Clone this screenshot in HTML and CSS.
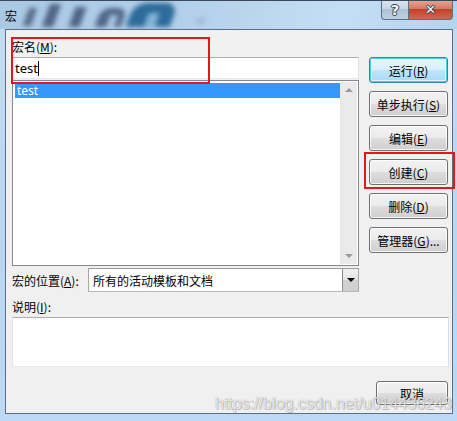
FILE: index.html
```html
<!DOCTYPE html>
<html>
<head>
<meta charset="utf-8">
<title>宏</title>
<link rel="stylesheet" href="styles.css">
</head>
<body>
<div class="window">
  <div class="titlebar">
    <div class="logo-blur">
      <span class="g g1"></span><span class="g g2"></span><span class="g g3"></span><span class="g g4"></span><span class="g g5"></span><span class="g g6"></span><span class="g g7"></span><span class="g g8"></span>
    </div>
    <span class="title">宏</span>
    <div class="caption-btns">
      <div class="cap help">?</div>
      <div class="cap close">✕</div>
    </div>
  </div>
  <div class="client">
    <div class="top">
      <div class="left">
        <div class="label">宏名(<u>M</u>):</div>
        <div class="input"><span class="input-text">test</span><span class="caret"></span></div>
        <div class="list">
          <div class="items"><div class="item sel">test</div></div>
          <div class="vscroll"><span class="arr up"></span><span class="arr down"></span></div>
        </div>
        <div class="locrow">
          <span class="label loc-label">宏的位置(<u>A</u>):</span>
          <div class="combo">
            <span class="combo-text">所有的活动模板和文档</span>
            <span class="combo-btn"><span class="tri"></span></span>
          </div>
        </div>
      </div>
      <div class="right">
        <div class="btn default">运行(<u>R</u>)</div>
        <div class="btn">单步执行(<u>S</u>)</div>
        <div class="btn">编辑(<u>E</u>)</div>
        <div class="btn">创建(<u>C</u>)</div>
        <div class="btn">删除(<u>D</u>)</div>
        <div class="btn">管理器(<u>G</u>)...</div>
      </div>
    </div>
    <div class="label desc-label">说明(<u>I</u>):</div>
    <div class="desc"></div>
    <div class="bottom"><div class="btn cancel">取消</div></div>
  </div>
  <div class="redbox r1"></div>
  <div class="redbox r2"></div>
  <div class="watermark">https://blog.csdn.net/u014436243</div>
</div>
</body>
</html>
```

FILE: styles.css
```css
* { box-sizing: border-box; }
html, body { margin: 0; padding: 0; }
body {
  width: 457px; height: 421px; overflow: hidden;
  font-family: "Noto Sans CJK SC", "Noto Sans", sans-serif;
  font-size: 12px; color: #000;
}
.window {
  position: relative;
  width: 457px; height: 421px;
  background: linear-gradient(180deg, #c2dcf2 0%, #b9d6f0 60%, #bcdaf5 100%);
  display: flex; flex-direction: column;
  overflow: hidden;
}
.titlebar {
  position: relative;
  height: 29px; flex: none;
  border-top: 1px solid #3a4a5c;
  background: linear-gradient(100deg, #a9c8e3 0%, #b3d0ea 40%, #c4def5 75%, #b4d3ee 100%);
  display: flex; align-items: center;
  overflow: hidden;
}
.title {
  position: relative;
  margin-left: 5px; margin-top: 2px;
  font-size: 12px; line-height: 14px;
  color: #000;
}
.logo-blur { position: absolute; left: 0; top: 0; width: 240px; height: 29px; filter: blur(2.5px); }
.g { position: absolute; display: block; transform: skewX(-20deg); }
.g1 { left: 26px; top: 7px; width: 8px; height: 18px; background: #566a88; }
.g2 { left: 46px; top: 3px; width: 11px; height: 23px; background: #4f6385; }
.g3 { left: 72px; top: 6px; width: 11px; height: 20px; background: #4f6385; }
.g4 { left: 98px; top: 7px; width: 26px; height: 19px; background: #506588; border-radius: 9px 9px 0 0; }
.g5 { left: 108px; top: 14px; width: 8px; height: 13px; background: #a9c8e3; }
.g6 { left: 130px; top: 2px; width: 44px; height: 24px; background: #2c6b9a; border-radius: 12px 12px 0 0; }
.g7 { left: 146px; top: 12px; width: 11px; height: 15px; background: #86b4d6; }
.g8 { left: 196px; top: 17px; width: 10px; height: 6px; background: #9bb9d4; border-radius: 50%; }
.caption-btns {
  position: absolute; right: 4px; top: -1px;
  display: flex; height: 20px;
}
.cap {
  height: 20px; display: flex; align-items: center; justify-content: center;
  font-family: "DejaVu Sans", sans-serif; font-weight: bold; color: #fff;
  border: 1px solid #5f6f80; border-top: none;
  text-shadow: 0 0 1px #2a3440, 1px 0 0 #3b4654, -1px 0 0 #3b4654, 0 1px 0 #3b4654, 0 -1px 0 #3b4654;
}
.help {
  width: 28px; font-size: 14px;
  border-radius: 0 0 0 4px;
  background: linear-gradient(180deg, #dbe6f1 0%, #c6d6e6 45%, #aec2d6 50%, #bcd0e3 100%);
}
.close {
  width: 44px; font-size: 13px; border-left: none;
  border-radius: 0 0 4px 0;
  background: linear-gradient(180deg, #e5a898 0%, #d47b66 45%, #c2432c 50%, #d0674d 100%);
}
.client {
  margin: 0 4px 7px 5px;
  height: 385px; flex: none;
  background: #f0f0f0;
  border: 1px solid #5d6f84;
  padding: 8px 4px 0 6px;
  display: flex; flex-direction: column;
}
.top { display: flex; gap: 10px; }
.left { width: 347px; display: flex; flex-direction: column; }
.label { line-height: 17px; height: 17px; white-space: nowrap; }
.label u { text-underline-offset: 1px; }
.input {
  margin-top: 2px; height: 22px;
  background: #fff; border: 1px solid #abadb3;
  border-color: #abadb3 #dbdfe6 #e3e9ef #e2e3ea;
  display: flex; align-items: center; padding-left: 2px;
}
.input-text { font-family: "Noto Sans", sans-serif; font-size: 13px; line-height: 16px; }
.caret { display: inline-block; width: 1px; height: 15px; background: #000; margin-left: 0; }
.list {
  margin-top: 1px; height: 186px;
  background: #fff; border: 1px solid #828790;
  display: flex; padding: 1px;
}
.items { flex: 1; padding: 1px 0 0 1px; }
.item { height: 15px; line-height: 15px; padding-left: 2px; font-family: "Noto Sans", sans-serif; font-size: 12px; }
.item.sel { background: #3399ff; color: #fff; }
.vscroll {
  width: 17px; background: #eaeaea; border-left: 1px solid #e6e6e6;
  display: flex; flex-direction: column; justify-content: space-between;
  align-items: center; padding: 6px 0 6px;
}
.arr { width: 0; height: 0; border-left: 4px solid transparent; border-right: 4px solid transparent; }
.arr.up { border-bottom: 4px solid #9a9a9a; }
.arr.down { border-top: 4px solid #9a9a9a; }
.locrow { margin-top: 2px; height: 24px; display: flex; align-items: center; }
.loc-label { width: 76px; }
.combo {
  flex: 1; height: 24px; background: #fff;
  border: 1px solid #7a7a7a; border-color: #9c9c9c #a8a8a8 #b8b8b8 #a8a8a8;
  display: flex; align-items: center;
}
.combo-text { flex: 1; padding-left: 4px; line-height: 17px; }
.combo-btn {
  width: 16px; height: 22px; margin-right: 0;
  border-left: 1px solid #8a8a8a;
  background: linear-gradient(180deg, #f2f2f2 0%, #e3e3e3 50%, #d2d2d2 51%, #cfcfcf 100%);
  display: flex; align-items: center; justify-content: center;
}
.tri { width: 0; height: 0; border-left: 4px solid transparent; border-right: 4px solid transparent; border-top: 4px solid #000; }
.right { width: 79px; padding-top: 19px; display: flex; flex-direction: column; gap: 8px; }
.btn {
  height: 26px; display: flex; align-items: center; justify-content: center;
  border: 1px solid #707070; border-radius: 3px;
  background: linear-gradient(180deg, #f2f2f2 0%, #ebebeb 48%, #dddddd 52%, #cfcfcf 100%);
  box-shadow: inset 0 0 0 1px rgba(255,255,255,0.8);
  white-space: nowrap; line-height: 17px;
}
.btn.default {
  border-color: #3c7fb1;
  box-shadow: inset 0 0 0 1px #48d0f5, inset 0 0 0 2px rgba(255,255,255,0.6);
  background: linear-gradient(180deg, #eaf6fd 0%, #d9f0fc 48%, #bee6fd 52%, #a7d9f5 100%);
}
.desc-label { margin-top: 6px; }
.desc {
  margin-top: 2px; width: 437px; height: 50px;
  background: #fff; border: 1px solid #abadb3;
  border-color: #abadb3 #dbdfe6 #e3e9ef #e2e3ea;
}
.bottom { margin-top: 14px; display: flex; justify-content: flex-end; }
.cancel { width: 72px; height: 24px; }
.redbox { position: absolute; border: 2px solid #e8141c; }
.r1 { left: 11px; top: 37px; width: 199px; height: 47px; }
.r2 { left: 364px; top: 152px; width: 91px; height: 37px; }
.watermark {
  position: absolute; left: 215px; top: 395px;
  font-family: "Liberation Sans", sans-serif; font-size: 16px; line-height: 18px;
  color: rgba(255,255,255,0.75);
  text-shadow: 0 0 1px rgba(90,90,90,0.6), 1px 1px 0 rgba(120,120,120,0.35);
  white-space: nowrap;
}
```
